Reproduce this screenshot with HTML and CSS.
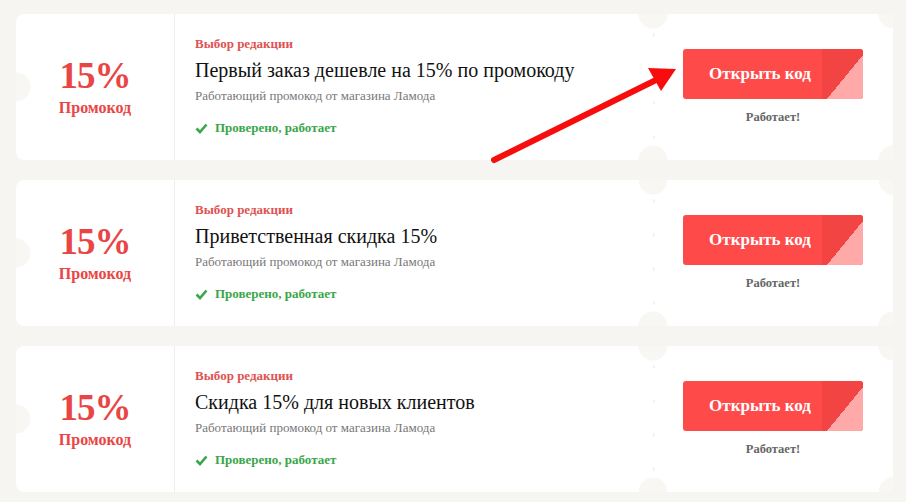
FILE: index.html
```html
<!DOCTYPE html>
<html lang="ru">
<head>
    <meta charset="UTF-8">
    <meta name="viewport" content="width=device-width, initial-scale=1.0">
    <title>Промокоды Ламода</title>
    <link rel="stylesheet" href="styles.css">
</head>
<body>

<div class="coupons">
    <div class="coupon">
        <div class="coupon-value">
            <span class="percent">15%</span>
            <span class="kind">Промокод</span>
        </div>
        <div class="coupon-body">
            <span class="badge">Выбор редакции</span>
            <h2 class="title">Первый заказ дешевле на 15% по промокоду</h2>
            <p class="desc">Работающий промокод от магазина Ламода</p>
            <span class="checked">
                <svg width="13" height="11" viewBox="0 0 13 11"><path d="M1.5 5.5 L5 9 L11.5 1.5" fill="none" stroke="#3aa64a" stroke-width="2.6"/></svg>
                Проверено, работает
            </span>
        </div>
        <div class="coupon-stub">
            <button class="open-btn">Открыть код<span class="fold"></span></button>
            <span class="status">Работает!</span>
        </div>
    </div>

    <div class="coupon">
        <div class="coupon-value">
            <span class="percent">15%</span>
            <span class="kind">Промокод</span>
        </div>
        <div class="coupon-body">
            <span class="badge">Выбор редакции</span>
            <h2 class="title">Приветственная скидка 15%</h2>
            <p class="desc">Работающий промокод от магазина Ламода</p>
            <span class="checked">
                <svg width="13" height="11" viewBox="0 0 13 11"><path d="M1.5 5.5 L5 9 L11.5 1.5" fill="none" stroke="#3aa64a" stroke-width="2.6"/></svg>
                Проверено, работает
            </span>
        </div>
        <div class="coupon-stub">
            <button class="open-btn">Открыть код<span class="fold"></span></button>
            <span class="status">Работает!</span>
        </div>
    </div>

    <div class="coupon">
        <div class="coupon-value">
            <span class="percent">15%</span>
            <span class="kind">Промокод</span>
        </div>
        <div class="coupon-body">
            <span class="badge">Выбор редакции</span>
            <h2 class="title">Скидка 15% для новых клиентов</h2>
            <p class="desc">Работающий промокод от магазина Ламода</p>
            <span class="checked">
                <svg width="13" height="11" viewBox="0 0 13 11"><path d="M1.5 5.5 L5 9 L11.5 1.5" fill="none" stroke="#3aa64a" stroke-width="2.6"/></svg>
                Проверено, работает
            </span>
        </div>
        <div class="coupon-stub">
            <button class="open-btn">Открыть код<span class="fold"></span></button>
            <span class="status">Работает!</span>
        </div>
    </div>
</div>

<!-- стрелка-указатель на первую кнопку -->
<svg class="pointer" width="906" height="502" viewBox="0 0 906 502">
    <line x1="494" y1="160" x2="658" y2="79" stroke="#f70d0d" stroke-width="6" stroke-linecap="round"/>
    <polygon points="676,69 648,68 661,91" fill="#f70d0d"/>
</svg>

</body>
</html>
```

FILE: styles.css
```css
body {
    font-family: "Liberation Serif", "Times New Roman", serif;
    background-color: #f6f5f1;
    margin: 0;
    padding: 0;
}
.coupons {
    display: flex;
    flex-direction: column;
    gap: 20px;
    padding: 14px 13px 0 16px;
}
.coupon {
    display: flex;
    height: 146px;
    border-radius: 8px 0 0 8px;
    /* вырезы билета: слева по центру, у линии отрыва и в правых углах */
    background:
        radial-gradient(circle at 0 50%, #f8f7f4 14px, transparent 15px),
        radial-gradient(circle at 637px 0, #f8f7f4 14px, transparent 15px),
        radial-gradient(circle at 637px 100%, #f8f7f4 14px, transparent 15px),
        radial-gradient(circle at 100% 0, #f8f7f4 14px, transparent 15px),
        radial-gradient(circle at 100% 100%, #f8f7f4 14px, transparent 15px),
        #fff;
}
.coupon-value {
    width: 158px;
    border-right: 1px solid #eeeeea;
    display: flex;
    flex-direction: column;
    align-items: center;
    justify-content: center;
    color: #e94545;
    font-weight: bold;
}
.percent {
    font-size: 37px;
    line-height: 36px;
    letter-spacing: -1px;
}
.kind {
    font-size: 16px;
    line-height: 18px;
    margin-top: 5px;
}
.coupon-body {
    flex: 1;
    padding: 22px 0 0 20px;
    display: flex;
    flex-direction: column;
    align-items: flex-start;
}
.badge {
    color: #e05252;
    font-size: 13px;
    font-weight: bold;
    line-height: 16px;
}
.title {
    margin: 6px 0 0;
    font-size: 20px;
    font-weight: normal;
    line-height: 24px;
    color: #111;
}
.desc {
    margin: 6px 0 0;
    font-size: 13px;
    line-height: 16px;
    color: #777;
}
.checked {
    margin-top: 16px;
    display: flex;
    align-items: center;
    gap: 7px;
    color: #3aa64a;
    font-size: 13px;
    font-weight: bold;
    line-height: 16px;
}
.coupon-stub {
    width: 240px;
    display: flex;
    flex-direction: column;
    align-items: center;
    justify-content: center;
    background-image: radial-gradient(circle, #f0efeb 1.5px, transparent 2px);
    background-size: 4px 34px;
    background-position: -2px 4px;
    background-repeat: repeat-y;
}
.open-btn {
    position: relative;
    width: 180px;
    height: 50px;
    padding: 0 26px 0 0;
    border: none;
    border-radius: 3px;
    background: #ff4a4a;
    color: #fff;
    font-family: inherit;
    font-size: 17px;
    font-weight: bold;
    cursor: pointer;
    overflow: hidden;
}
.fold {
    position: absolute;
    top: 0;
    right: 0;
    width: 41px;
    height: 50px;
    background: linear-gradient(to bottom right, #f34444 56%, #ffa9a9 56%);
}
.status {
    margin-top: 10px;
    font-size: 12.5px;
    font-weight: bold;
    line-height: 16px;
    color: #666;
}
.pointer {
    position: absolute;
    top: 0;
    left: 0;
    pointer-events: none;
}
```
